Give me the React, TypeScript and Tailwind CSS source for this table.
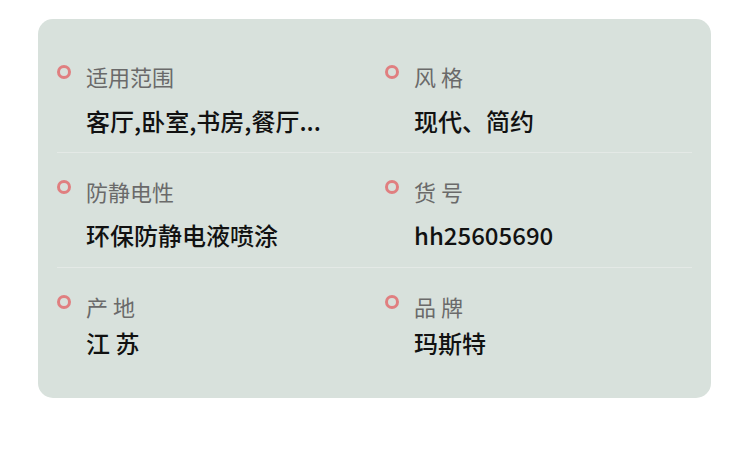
import React from "react";

type Item = { label: string; value: string };

const rows: { items: [Item, Item]; pt: string; gap: string; pb: string; divider: boolean }[] = [
  {
    items: [
      { label: "适用范围", value: "客厅,卧室,书房,餐厅..." },
      { label: "风 格", value: "现代、简约" },
    ],
    pt: "pt-[24px]",
    gap: "mt-[14px]",
    pb: "pb-[15px]",
    divider: true,
  },
  {
    items: [
      { label: "防静电性", value: "环保防静电液喷涂" },
      { label: "货 号", value: "hh25605690" },
    ],
    pt: "pt-[25px]",
    gap: "mt-[13px]",
    pb: "pb-[16px]",
    divider: true,
  },
  {
    items: [
      { label: "产 地", value: "江 苏" },
      { label: "品 牌", value: "玛斯特" },
    ],
    pt: "pt-[25px]",
    gap: "mt-[6px]",
    pb: "pb-[39px]",
    divider: false,
  },
];

function Cell({ item, gap, first }: { item: Item; gap: string; first: boolean }) {
  return (
    <div className={`flex ${first ? "w-[328px]" : "flex-1"}`}>
      <div className="mt-[2px] h-[14px] w-[14px] shrink-0 rounded-full border-[3px] border-[#e07f80]" />
      <div className="ml-[15px] -mt-[2px] flex flex-col">
        <div className="text-[22px] leading-[30px] text-[#6a6a6a] whitespace-pre">{item.label}</div>
        <div className={`${gap} text-[24px] font-medium leading-[32px] text-[#111111] whitespace-pre`}>{item.value}</div>
      </div>
    </div>
  );
}

export default function App() {
  return (
    <div
      className="h-[456px] w-[750px] bg-white pl-[38px] pt-[19px]"
      style={{ fontFamily: '"Noto Sans CJK SC", "Noto Sans", sans-serif' }}
    >
      <div className="w-[673px] rounded-[15px] bg-[#d8e1dc] px-[19px] pt-[20px]">
        {rows.map((r, i) => (
          <div key={i} className={`${r.pt} ${r.pb} ${r.divider ? "border-b border-[#e4e9e6]" : ""} flex`}>
            <Cell item={r.items[0]} gap={r.gap} first />
            <Cell item={r.items[1]} gap={r.gap} first={false} />
          </div>
        ))}
      </div>
    </div>
  );
}
